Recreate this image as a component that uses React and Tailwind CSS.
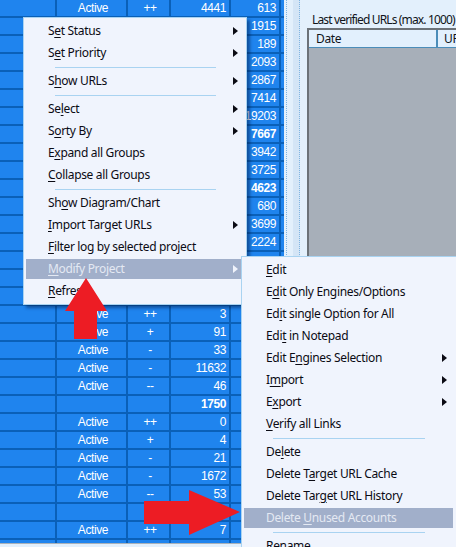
const rows = [
  ['Active', '++', '4441', '613'],
  ['', '', '', '1915'],
  ['', '', '', '189'],
  ['', '', '', '2093'],
  ['', '', '', '2867'],
  ['', '', '', '7414'],
  ['', '', '', '19203'],
  ['', '', '', '7667', true],
  ['', '', '', '3942'],
  ['', '', '', '3725'],
  ['', '', '', '4623', true],
  ['', '', '', '680'],
  ['', '', '', '3699'],
  ['', '', '', '2224'],
  ['', '', '', ''],
  ['', '', '', ''],
  ['', '', '', ''],
  ['Active', '++', '3', ''],
  ['Active', '+', '91', ''],
  ['Active', '-', '33', ''],
  ['Active', '-', '11632', ''],
  ['Active', '--', '46', ''],
  ['', '', '1750', '', true],
  ['Active', '++', '0', ''],
  ['Active', '+', '4', ''],
  ['Active', '-', '21', ''],
  ['Active', '-', '1672', ''],
  ['Active', '--', '53', ''],
  ['', '', '', ''],
  ['Active', '++', '7', ''],
  ['', '', '', ''],
]

const mainMenu = [
  { label: 'Set Status', u: 1, arrow: true },
  { label: 'Set Priority', u: 1, arrow: true },
  { sep: true },
  { label: 'Show URLs', u: 1, arrow: true },
  { sep: true },
  { label: 'Select', u: 2, arrow: true },
  { label: 'Sorty By', u: 1, arrow: true },
  { label: 'Expand all Groups', u: 1 },
  { label: 'Collapse all Groups', u: 0 },
  { sep: true },
  { label: 'Show Diagram/Chart', u: 2 },
  { label: 'Import Target URLs', u: 0, arrow: true },
  { label: 'Filter log by selected project', u: 0 },
  { label: 'Modify Project', u: 0, arrow: true, active: true },
  { label: 'Refresh', u: 0 },
]

const subMenu = [
  { label: 'Edit', u: 0 },
  { label: 'Edit Only Engines/Options', u: 1 },
  { label: 'Edit single Option for All', u: 2 },
  { label: 'Edit in Notepad', u: 3 },
  { label: 'Edit Engines Selection', u: 6, arrow: true },
  { label: 'Import', u: 1, arrow: true },
  { label: 'Export', u: 1, arrow: true },
  { label: 'Verify all Links', u: 0 },
  { sep: true },
  { label: 'Delete', u: 2 },
  { label: 'Delete Target URL Cache', u: 8 },
  { label: 'Delete Target URL History', u: 10 },
  { label: 'Delete Unused Accounts', u: 7, active: true },
  { sep: true },
  { label: 'Rename', u: 0 },
]

function MenuItem({ item }) {
  if (item.sep) {
    return (
      <div className="h-[6px] flex items-center pl-[29px] pr-[28px]">
        <div className="h-px w-full bg-[#a9d3f1]"></div>
      </div>
    )
  }
  const { label, u } = item
  return (
    <div className="h-[22px] py-px">
      <div className={`h-5 flex items-center justify-between pl-[22px] pr-[6px] ${item.active ? 'bg-[#a1afca] text-[#e4e9f3]' : 'text-[#0b0b14]'}`}>
        <span className="whitespace-pre tracking-[-0.33px]">
          {label.slice(0, u)}
          <span className="underline underline-offset-2">{label[u]}</span>
          {label.slice(u + 1)}
        </span>
        {item.arrow && (
          <svg width="5" height="8" viewBox="0 0 5 8">
            <path d="M0 0 L5 4 L0 8 Z" fill={item.active ? '#f0f3fb' : '#0b0b14'} />
          </svg>
        )}
      </div>
    </div>
  )
}

export default function App() {
  return (
    <div className="relative w-[456px] h-[547px] overflow-hidden bg-[#e3f0fc] font-['Noto_Sans',sans-serif] text-[12px]">
      <div className="flex h-full">
        <div className="w-[284px] shrink-0 h-[544px] overflow-hidden bg-[#1f84ee] border-b border-[#aab2ba]">
          {rows.map((r, i) => (
            <div key={i} className={`h-[18px] grid grid-cols-[57px_71px_43px_60px_50px] border-b-2 border-[#0a60b8] text-white text-[12px] tracking-[-0.4px] font-['Liberation_Sans',sans-serif] ${r[4] ? 'font-bold' : ''}`}>
              <div className="border-r-2 border-[#0a60b8]"></div>
              <div className="border-r-2 border-[#0a60b8] text-center pl-[3px] leading-[16px]">{r[0]}</div>
              <div className="border-r-2 border-[#0a60b8] text-center pl-[3px] leading-[16px]">{r[1]}</div>
              <div className="border-r-2 border-[#0a60b8] text-right pr-[3px] leading-[16px]">{r[2]}</div>
              <div className="border-r-2 border-[#0a60b8] text-right pr-[3px] leading-[16px]">{r[3]}</div>
            </div>
          ))}
        </div>
        <div className="w-[7px] ml-[2px] shrink-0 bg-[#e3f0fc] border-l border-dotted border-[#7fb4e2]"></div>
        <div className="w-[7px] shrink-0 bg-[#d4e5f6] border-r border-dotted border-[#7fb4e2]"></div>
        <div className="flex-1 min-w-0 pl-[7px] pt-[12px]">
          <div className="h-[16px] pl-[5px] leading-[15px] text-[#10141a] whitespace-nowrap tracking-[-0.85px]">Last verified URLs (max. 1000)</div>
          <div className="h-[519px] w-[160px] border-2 border-[#6c7278] bg-[#a7afb9]">
            <div className="h-[18px] flex bg-[#e2f0fd] text-[#10141a] border-b border-[#4b8db9] tracking-[-0.33px]">
              <div className="w-[129px] shrink-0 pl-[7px] border-r-2 border-[#4b8db9] leading-[17px]">Date</div>
              <div className="pl-[6px] leading-[17px]">URL</div>
            </div>
          </div>
        </div>
      </div>

      <div className="absolute left-[23px] top-[17px] w-[224px] border border-[#a9d3f1] bg-[#f0f4fd] p-[2px] shadow-[3px_3px_3px_rgba(0,20,60,0.45)]">
        {mainMenu.map((m, i) => <MenuItem key={i} item={m} />)}
      </div>

      <div className="absolute left-[241px] top-[256px] w-[215px] h-[300px] border-t border-l border-[#a9d3f1] bg-[#f0f4fd] pt-[2px] pl-[2px] pr-[3px]">
        {subMenu.map((m, i) => <MenuItem key={i} item={m} />)}
      </div>

      <svg className="absolute left-0 top-0" width="456" height="547" viewBox="0 0 456 547">
        <path d="M86 278 L107 311 L97 311 L97 339 L74 339 L74 311 L65 311 Z" fill="#ed1c24" />
        <path d="M144 501 L189 501 L189 490 L240 512 L189 535 L189 524 L144 524 Z" fill="#ed1c24" />
      </svg>
    </div>
  )
}
